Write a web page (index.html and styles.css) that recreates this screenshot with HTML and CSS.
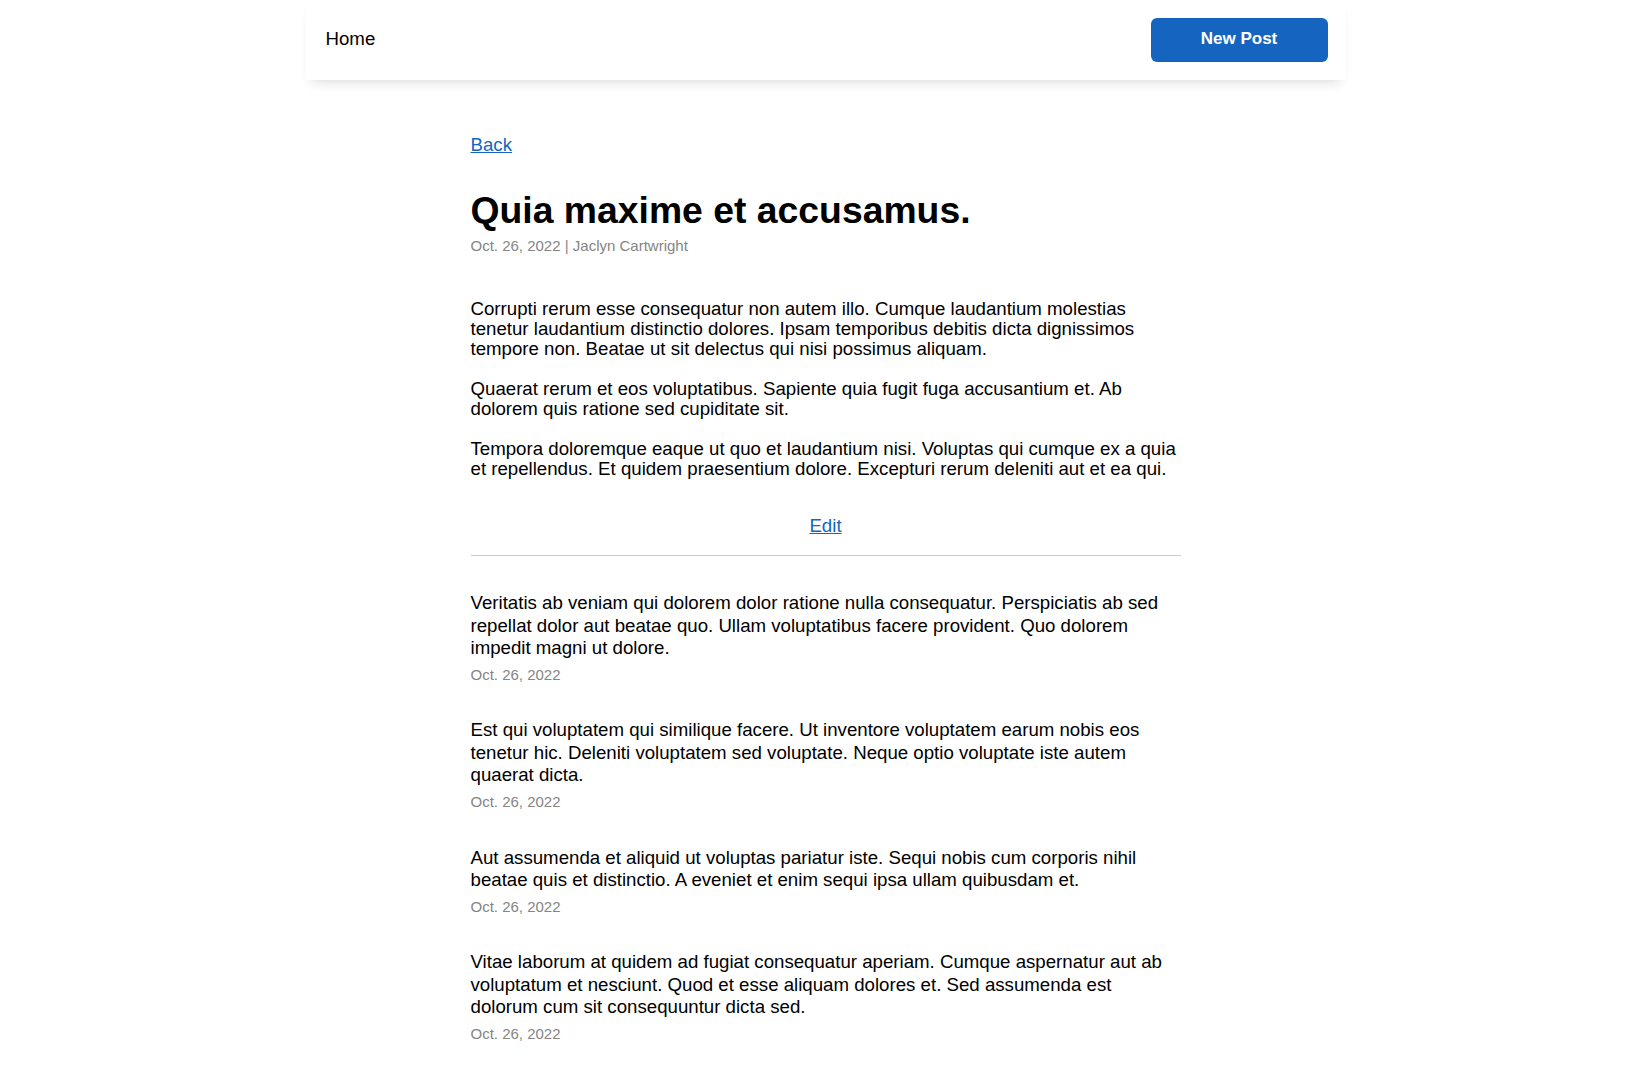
FILE: index.html
```html
<!DOCTYPE html>
<html lang="en">
<head>
<meta charset="utf-8">
<title>Quia maxime et accusamus.</title>
<link rel="stylesheet" href="styles.css">
</head>
<body>
<header class="topbar">
  <a class="nav-home" href="#">Home</a>
  <a class="btn-primary" href="#">New Post</a>
</header>
<main class="post">
  <a class="link back" href="#">Back</a>
  <h1 class="post-title">Quia maxime et accusamus.</h1>
  <div class="meta">Oct. 26, 2022 | Jaclyn Cartwright</div>
  <div class="post-body">
    <p>Corrupti rerum esse consequatur non autem illo. Cumque laudantium molestias tenetur laudantium distinctio dolores. Ipsam temporibus debitis dicta dignissimos tempore non. Beatae ut sit delectus qui nisi possimus aliquam.</p>
    <p>Quaerat rerum et eos voluptatibus. Sapiente quia fugit fuga accusantium et. Ab dolorem quis ratione sed cupiditate sit.</p>
    <p>Tempora doloremque eaque ut quo et laudantium nisi. Voluptas qui cumque ex a quia et repellendus. Et quidem praesentium dolore. Excepturi rerum deleniti aut et ea qui.</p>
  </div>
  <div class="edit-row"><a class="link" href="#">Edit</a></div>
  <hr class="divider">
  <section class="comments">
    <article class="comment">
      <p>Veritatis ab veniam qui dolorem dolor ratione nulla consequatur. Perspiciatis ab sed repellat dolor aut beatae quo. Ullam voluptatibus facere provident. Quo dolorem impedit magni ut dolore.</p>
      <div class="meta">Oct. 26, 2022</div>
    </article>
    <article class="comment">
      <p>Est qui voluptatem qui similique facere. Ut inventore voluptatem earum nobis eos tenetur hic. Deleniti voluptatem sed voluptate. Neque optio voluptate iste autem quaerat dicta.</p>
      <div class="meta">Oct. 26, 2022</div>
    </article>
    <article class="comment">
      <p>Aut assumenda et aliquid ut voluptas pariatur iste. Sequi nobis cum corporis nihil beatae quis et distinctio. A eveniet et enim sequi ipsa ullam quibusdam et.</p>
      <div class="meta">Oct. 26, 2022</div>
    </article>
    <article class="comment">
      <p>Vitae laborum at quidem ad fugiat consequatur aperiam. Cumque aspernatur aut ab voluptatum et nesciunt. Quod et esse aliquam dolores et. Sed assumenda est dolorum cum sit consequuntur dicta sed.</p>
      <div class="meta">Oct. 26, 2022</div>
    </article>
  </section>
</main>
</body>
</html>
```

FILE: styles.css
```css
* { box-sizing: border-box; }

html, body {
  margin: 0;
  padding: 0;
  background: #ffffff;
}

body {
  font-family: "Liberation Sans", Helvetica, Arial, sans-serif;
  font-size: 18.67px;
  color: #000000;
}

.topbar {
  width: 1040px;
  height: 80px;
  margin: 0 auto;
  padding: 0 20px;
  display: flex;
  align-items: center;
  justify-content: space-between;
  background: #ffffff;
  box-shadow: 0 8px 12px -6px rgba(0, 0, 0, 0.14), 0 0 2px rgba(0, 0, 0, 0.02);
}

.nav-home {
  color: #000000;
  text-decoration: none;
  font-size: 18.67px;
  line-height: 22px;
  margin-bottom: 2px;
}

.btn-primary {
  width: 177px;
  height: 44px;
  margin-right: -2px;
  display: flex;
  align-items: center;
  justify-content: center;
  background: #1565c0;
  color: #ffffff;
  font-weight: bold;
  font-size: 17px;
  text-decoration: none;
  border-radius: 6px;
  padding-bottom: 3px;
}

.post {
  width: 710px;
  margin: 0 auto;
  padding-top: 54px;
  padding-bottom: 40px;
  display: flex;
  flex-direction: column;
}

.link {
  color: #1565c0;
  text-decoration: underline;
  line-height: 22px;
}

.back {
  align-self: flex-start;
}

.post-title {
  margin: 33px 0 0;
  font-size: 37.33px;
  line-height: 43px;
  font-weight: bold;
}

.meta {
  font-size: 15px;
  line-height: 18px;
  color: #858585;
}

.post .meta {
  margin-top: 5px;
}

.post-body {
  margin-top: 44px;
}

.post-body p {
  margin: 0 0 20px;
  line-height: 20px;
}

.post-body p:last-child {
  margin-bottom: 0;
}

.edit-row {
  margin-top: 36px;
  text-align: center;
  line-height: 22px;
}

.divider {
  margin: 18px 0 0;
  border: 0;
  border-top: 1px solid #cccccc;
  height: 0;
}

.comments {
  margin-top: 36px;
  display: flex;
  flex-direction: column;
  gap: 35.5px;
}

.comment p {
  margin: 0;
  line-height: 22.6px;
}

.comment .meta {
  margin-top: 6px;
}
```
